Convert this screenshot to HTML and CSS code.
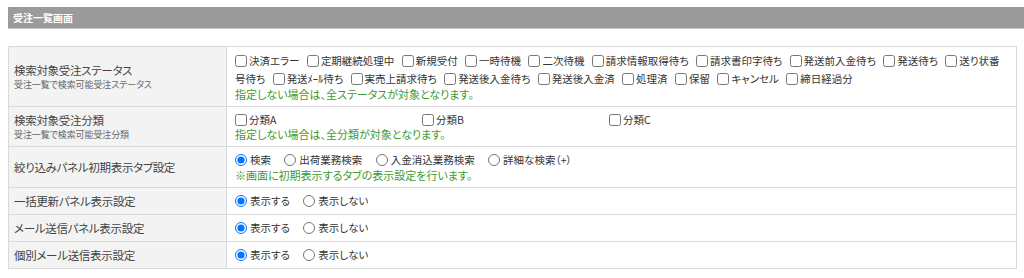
FILE: index.html
```html
<!DOCTYPE html>
<html lang="ja">

<head>
    <meta charset="UTF-8">
    <title>受注一覧画面</title>
    <link rel="stylesheet" href="styles.css">
</head>

<body>
    <div class="page-title">受注一覧画面</div>

    <table class="setting">
        <tr>
            <th>
                <span class="name">検索対象受注ステータス</span>
                <span class="desc">受注一覧で検索可能受注ステータス</span>
            </th>
            <td>
                <div class="checks">
                    <label><input type="checkbox">決済エラー</label>
                    <label><input type="checkbox">定期継続処理中</label>
                    <label><input type="checkbox">新規受付</label>
                    <label><input type="checkbox">一時待機</label>
                    <label><input type="checkbox">二次待機</label>
                    <label><input type="checkbox">請求情報取得待ち</label>
                    <label><input type="checkbox">請求書印字待ち</label>
                    <label><input type="checkbox">発送前入金待ち</label>
                    <label><input type="checkbox">発送待ち</label>
                    <label><input type="checkbox"><span>送り状番</span><span>号待ち</span></label>
                    <label><input type="checkbox">発送ﾒｰﾙ待ち</label>
                    <label><input type="checkbox">実売上請求待ち</label>
                    <label><input type="checkbox">発送後入金待ち</label>
                    <label><input type="checkbox">発送後入金済</label>
                    <label><input type="checkbox">処理済</label>
                    <label><input type="checkbox">保留</label>
                    <label><input type="checkbox">キャンセル</label>
                    <label><input type="checkbox">締日経過分</label>
                </div>
                <div class="hint">指定しない場合は、全ステータスが対象となります。</div>
            </td>
        </tr>
        <tr>
            <th>
                <span class="name">検索対象受注分類</span>
                <span class="desc">受注一覧で検索可能受注分類</span>
            </th>
            <td>
                <div class="cols">
                    <label><input type="checkbox">分類A</label>
                    <label><input type="checkbox">分類B</label>
                    <label><input type="checkbox">分類C</label>
                </div>
                <div class="hint">指定しない場合は、全分類が対象となります。</div>
            </td>
        </tr>
        <tr>
            <th><span class="name">絞り込みパネル初期表示タブ設定</span></th>
            <td>
                <div class="radios">
                    <label><input type="radio" name="tab" checked>検索</label>
                    <label><input type="radio" name="tab">出荷業務検索</label>
                    <label><input type="radio" name="tab">入金消込業務検索</label>
                    <label><input type="radio" name="tab">詳細な検索（+）</label>
                </div>
                <div class="hint">※画面に初期表示するタブの表示設定を行います。</div>
            </td>
        </tr>
        <tr>
            <th><span class="name">一括更新パネル表示設定</span></th>
            <td>
                <div class="radios">
                    <label><input type="radio" name="bulk" checked>表示する</label>
                    <label><input type="radio" name="bulk">表示しない</label>
                </div>
            </td>
        </tr>
        <tr>
            <th><span class="name">メール送信パネル表示設定</span></th>
            <td>
                <div class="radios">
                    <label><input type="radio" name="mail" checked>表示する</label>
                    <label><input type="radio" name="mail">表示しない</label>
                </div>
            </td>
        </tr>
        <tr>
            <th><span class="name">個別メール送信表示設定</span></th>
            <td>
                <div class="radios">
                    <label><input type="radio" name="each" checked>表示する</label>
                    <label><input type="radio" name="each">表示しない</label>
                </div>
            </td>
        </tr>
    </table>
</body>

</html>
```

FILE: styles.css
```css
body {
    margin: 7px 0 0 8px;
    font-family: "Noto Sans CJK JP", "Noto Sans", sans-serif;
    font-feature-settings: "palt";
    color: #333;
    background: #fff;
}

/* 見出しバー */
.page-title {
    height: 21px;
    line-height: 21px;
    padding-left: 5px;
    background: #9b9b9b;
    border-bottom: 1px solid #c8c8c8;
    color: #fff;
    font-size: 10px;
    font-weight: bold;
}

.setting {
    width: 1009px;
    margin-top: 17px;
    border-collapse: collapse;
    border: 1px solid #d9d9d9;
}

.setting th,
.setting td {
    border: 1px solid #d9d9d9;
    vertical-align: middle;
    text-align: left;
}

.setting th {
    width: 207px;
    padding: 5px 5px;
    background: #f3f3f3;
    font-weight: normal;
}

.setting td {
    padding: 5px 8px;
    font-size: 10.5px;
}

.name {
    display: block;
    font-size: 11.5px;
    letter-spacing: -0.3px;
    line-height: 15px;
    color: #444;
}

.desc {
    display: block;
    font-size: 9px;
    letter-spacing: -0.1px;
    line-height: 13px;
    color: #666;
}

.checks {
    line-height: 18px;
}

.cols,
.radios {
    line-height: 16px;
}

.checks label {
    margin-right: 5px;
}

.setting input {
    width: 12px;
    height: 12px;
    vertical-align: -2px;
    margin: 0 2px 0 0;
}

.cols {
    display: flex;
}

.cols label {
    width: 187px;
}

.radios label {
    display: inline-block;
    margin-right: 11px;
}

.radios input {
    margin: 0 3px 0 0;
}

.hint {
    color: #3c9a32;
    font-size: 11px;
    line-height: 13px;
}

.radios + .hint {
    line-height: 14px;
}
```
